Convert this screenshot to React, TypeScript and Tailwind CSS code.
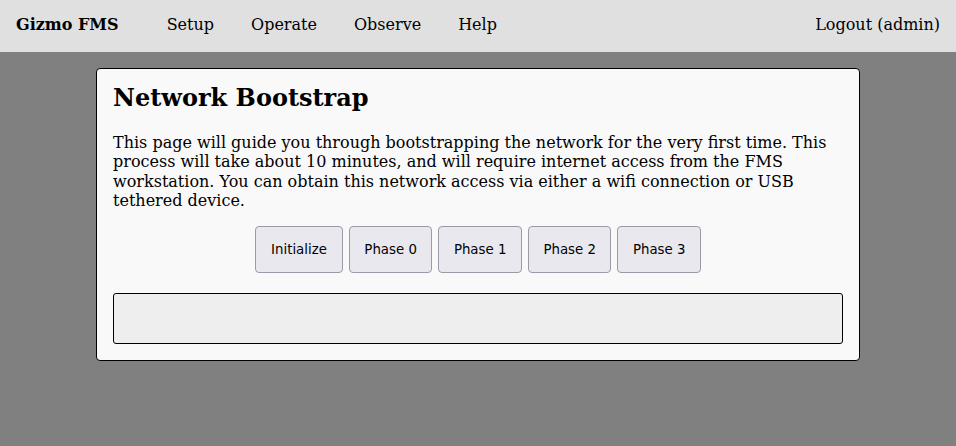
import React from "react";

export default function App() {
  const serif = { fontFamily: '"DejaVu Serif", serif' };
  return (
    <div className="min-h-[446px] bg-[#808080]" style={serif}>
      <nav className="h-[52px] bg-[#e0e0e0] flex items-center px-4 pb-[2px] text-[16px] text-black">
        <span className="font-bold">Gizmo FMS</span>
        <span className="ml-[48px]">Setup</span>
        <span className="ml-[37px]">Operate</span>
        <span className="ml-[37px]">Observe</span>
        <span className="ml-[37px]">Help</span>
        <span className="ml-auto">Logout (admin)</span>
      </nav>
      <div className="flex justify-center pt-4">
        <div className="w-[764px] bg-[#f9f9f9] border border-black rounded-[4px] p-4">
          <h2 className="text-[24px] font-bold leading-[26px]">Network Bootstrap</h2>
          <p className="mt-[22px] text-[16px] leading-[19.4px] text-black">
            This page will guide you through bootstrapping the network for the very first time. This
            process will take about 10 minutes, and will require internet access from the FMS
            workstation. You can obtain this network access via either a wifi connection or USB
            tethered device.
          </p>
          <div className="flex justify-center gap-[6px] mt-[15px]" style={{ fontFamily: '"DejaVu Sans", sans-serif' }}>
            {["Initialize", "Phase 0", "Phase 1", "Phase 2", "Phase 3"].map((b) => (
              <button
                key={b}
                className={
                  "h-[47px] pt-[1px] bg-[#e9e8ee] border border-[#9b9aa6] rounded-[4px] text-[13.33px] text-black " +
                  (b === "Initialize" ? "px-[15px]" : "px-[14.5px]")
                }
              >
                {b}
              </button>
            ))}
          </div>
          <div className="mt-[20px] h-[51px] bg-[#eeeeee] border border-black rounded-[3px]"></div>
        </div>
      </div>
    </div>
  );
}
